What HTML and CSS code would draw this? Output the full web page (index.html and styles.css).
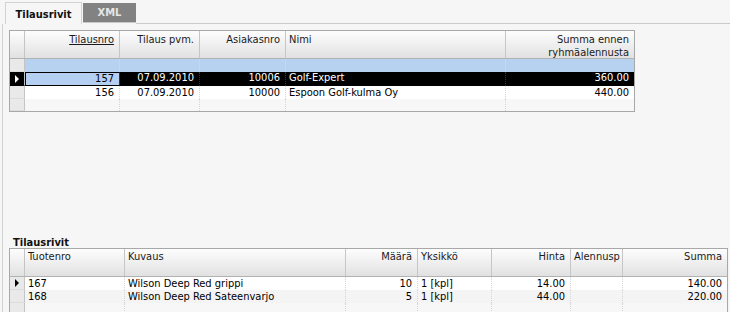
FILE: index.html
```html
<!DOCTYPE html>
<html>
<head>
<meta charset="utf-8">
<link rel="stylesheet" href="styles.css">
</head>
<body>
<div class="tabs">
  <div class="tab active">Tilausrivit</div>
  <div class="tab inactive">XML</div>
  <div class="tab-fill"></div>
</div>
<div class="panel">
  <div class="top">
    <div class="grid orders">
      <div class="row head">
        <div class="rh"></div>
        <div class="c r"><span class="sorted">Tilausnro</span></div>
        <div class="c r">Tilaus pvm.</div>
        <div class="c r">Asiakasnro</div>
        <div class="c">Nimi</div>
        <div class="c r last">Summa ennen<br>ryhmäalennusta</div>
      </div>
      <div class="row filter">
        <div class="rh"></div>
        <div class="c"></div><div class="c"></div><div class="c"></div><div class="c"></div><div class="c last"></div>
      </div>
      <div class="row data selected">
        <div class="rh"><span class="arrow"></span></div>
        <div class="c r focus">157</div>
        <div class="c r">07.09.2010</div>
        <div class="c r">10006</div>
        <div class="c">Golf-Expert</div>
        <div class="c r last">360.00</div>
      </div>
      <div class="row data">
        <div class="rh"></div>
        <div class="c r">156</div>
        <div class="c r">07.09.2010</div>
        <div class="c r">10000</div>
        <div class="c">Espoon Golf-kulma Oy</div>
        <div class="c r last">440.00</div>
      </div>
      <div class="row empty">
        <div class="rh"></div>
        <div class="c"></div><div class="c"></div><div class="c"></div><div class="c"></div><div class="c last"></div>
      </div>
    </div>
  </div>
  <div class="section-title">Tilausrivit</div>
  <div class="grid lines">
    <div class="row head">
      <div class="rh"></div>
      <div class="c">Tuotenro</div>
      <div class="c">Kuvaus</div>
      <div class="c r">Määrä</div>
      <div class="c">Yksikkö</div>
      <div class="c r">Hinta</div>
      <div class="c clip">Alennusp</div>
      <div class="c r last">Summa</div>
    </div>
    <div class="row data">
      <div class="rh"><span class="arrow dark"></span></div>
      <div class="c">167</div>
      <div class="c">Wilson Deep Red grippi</div>
      <div class="c r">10</div>
      <div class="c">1 [kpl]</div>
      <div class="c r">14.00</div>
      <div class="c"></div>
      <div class="c r last">140.00</div>
    </div>
    <div class="row data alt">
      <div class="rh"></div>
      <div class="c">168</div>
      <div class="c">Wilson Deep Red Sateenvarjo</div>
      <div class="c r">5</div>
      <div class="c">1 [kpl]</div>
      <div class="c r">44.00</div>
      <div class="c"></div>
      <div class="c r last">220.00</div>
    </div>
    <div class="row empty">
      <div class="rh"></div>
      <div class="c"></div><div class="c"></div><div class="c"></div><div class="c"></div><div class="c"></div><div class="c"></div><div class="c last"></div>
    </div>
  </div>
</div>
</body>
</html>
```
FILE: styles.css
```css
html, body {
  margin: 0;
  padding: 0;
  background: #f6f6f6;
  overflow: hidden;
  width: 730px;
  height: 312px;
}
body {
  font-family: "DejaVu Sans Condensed", "DejaVu Sans", sans-serif;
  font-size: 11px;
  color: #000;
}
.tabs {
  display: flex;
  align-items: flex-end;
  height: 24px;
  padding-left: 5px;
  box-sizing: border-box;
}
.tab {
  box-sizing: border-box;
  font-weight: bold;
  font-size: 11px;
  display: flex;
  align-items: center;
  justify-content: center;
}
.tab.active {
  width: 77px;
  height: 22px;
  border: 1px solid #d2d2d2;
  border-bottom: none;
  background: #f6f6f6;
  color: #111;
  padding-top: 1px;
}
.tab.inactive {
  width: 53px;
  height: 20px;
  margin-bottom: 1px;
  background: #828282;
  color: #e6e6e6;
  margin-left: 1px;
  border-bottom: 1px solid #c8c8c8;
}
.tab-fill {
  flex: 1;
  border-bottom: 1px solid #cbcbcb;
  height: 0;
}
.panel {
  margin-left: 2px;
  border-left: 1px solid #d2d2d2;
  padding: 6px 0 0 6px;
  height: 282px;
}
.top {
  height: 207px;
}
.grid {
  border: 1px solid #a8a8a8;
  background: #f7f7f7;
}
.orders {
  width: 624px;
}
.lines {
  width: 717px;
  border-bottom: none;
}
.orders .row {
  display: grid;
  grid-template-columns: 15px 95px 80px 86px 220px 128px;
}
.lines .row {
  display: grid;
  grid-template-columns: 15px 100px 221px 72px 74px 79px 52px 104px;
}
.c, .rh {
  box-sizing: border-box;
  white-space: nowrap;
  overflow: hidden;
  line-height: 13px;
}
.c {
  padding: 0 5px 0 3px;
  border-right: 1px dotted #d6d6d6;
}
.c.last {
  border-right: none;
}
.r {
  text-align: right;
}
.rh {
  background: #e9e9e9;
  border-right: 1px solid #c4c4c4;
  border-bottom: 1px solid #dcdcdc;
  display: flex;
  align-items: center;
  padding-left: 5px;
}
.row.head {
  height: 28px;
  background: linear-gradient(#fdfdfd, #f2f2f2 40%, #e1e1e1);
  border-bottom: 1px solid #b2b2b2;
  box-sizing: border-box;
  color: #1a1a1a;
}
.row.head .c {
  border-right: 1px solid #c6c6c6;
  padding-top: 2px;
}
.row.head .c.last {
  border-right: none;
}
.row.head .rh {
  background: transparent;
  border-bottom: none;
}
.lines .row.head .c {
  padding-top: 1px;
}
.sorted {
  text-decoration: underline;
}
.row.filter {
  height: 13px;
  background: #b7d2f1;
}
.row.filter .c {
  border-right-color: #c9ddf5;
}
.row.filter .rh {
  background: #e9e9e9;
}
.row.data {
  height: 13px;
  background: #fff;
}
.row.data.alt {
  background: #f4f4f4;
}
.row.selected {
  height: 14px;
  background: #000;
  color: #fff;
}
.row.selected .rh {
  background: #000;
  border-bottom-color: #000;
}
.row.selected .c {
  border-right-color: #333;
  line-height: 12px;
}
.c.focus {
  background: #b4cff0;
  color: #000;
  border: 1px solid #000;
  line-height: 10px;
}
.row.empty {
  height: 12px;
}
.lines .row.empty {
  height: 20px;
}
.arrow {
  width: 0;
  height: 0;
  border-left: 4px solid #fff;
  border-top: 4px solid transparent;
  border-bottom: 4px solid transparent;
}
.arrow.dark {
  border-left-color: #000;
}
.section-title {
  font-weight: bold;
  padding-left: 4px;
  height: 11px;
  line-height: 11px;
  color: #111;
}
.clip {
  text-overflow: clip;
}
```
